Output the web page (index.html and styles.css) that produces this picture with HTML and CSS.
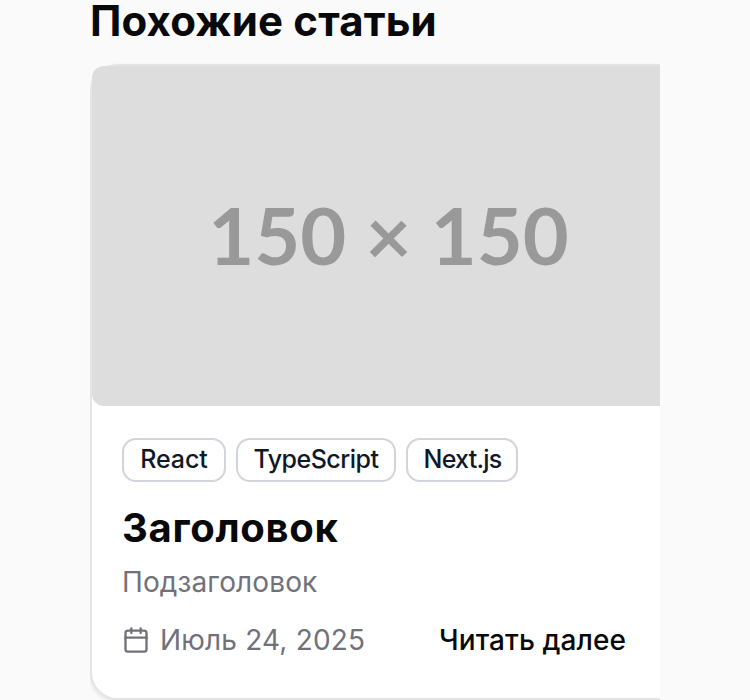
FILE: index.html
```html
<!DOCTYPE html>
<html lang="ru">
<head>
<meta charset="utf-8">
<title>Похожие статьи</title>
<link rel="stylesheet" href="styles.css">
</head>
<body>
<section class="related">
  <h2 class="heading">Похожие статьи</h2>
  <article class="card">
    <div class="thumb"><span>150 × 150</span></div>
    <div class="body">
      <div class="tags"><span class="tag react">React</span><span class="tag ts">TypeScript</span><span class="tag next">Next.js</span></div>
      <h3 class="title">Заголовок</h3>
      <p class="subtitle">Подзаголовок</p>
      <div class="footer">
        <svg class="icon" viewBox="0 0 24 24"><path d="M8 2v4M16 2v4M3 10h18"/><rect x="3" y="4" width="18" height="18" rx="2"/></svg>
        <span class="date">Июль 24, 2025</span>
        <a class="more">Читать далее</a>
      </div>
    </div>
  </article>
</section>
</body>
</html>
```
FILE: styles.css
```css
* { box-sizing: border-box; }
body { margin: 0; background: #fafafa; color: #09090b; font-family: Inter, "Liberation Sans", sans-serif; height: 700px; overflow: hidden; }
.related { margin-left: 90px; width: 570px; height: 700px; overflow-x: clip; }
.heading { margin: 0; height: 64px; font-size: 42px; line-height: 42px; font-weight: 700; letter-spacing: .15px; white-space: nowrap; }
.card { width: 600px; height: 636px; background: #fff; border: 2px solid #e4e4e4; border-radius: 28px; box-shadow: 0 2px 4px rgba(0,0,0,.1); }
.thumb { width: 596px; height: 340px; padding: 0 3px 3px 0; background: #ddd; border-radius: 12px; display: flex; align-items: center; justify-content: center; color: #999; font: 700 79.3px Lato, sans-serif; white-space: nowrap; }
.body { padding: 32px 32px 0 30px; }
.tags { display: flex; gap: 10px; }
.tag { height: 44px; border: 2px solid #d1d5db; border-radius: 14px; color: #111827; font-size: 25px; line-height: 38px; font-weight: 450; text-align: center; white-space: nowrap; }
.react { width: 104px; letter-spacing: -.1px; }
.ts { width: 160px; letter-spacing: -.5px; }
.next { width: 112px; padding-left: 1px; letter-spacing: -.75px; }
.title { margin: 20px 0 0; font-size: 40px; line-height: 52px; letter-spacing: .7px; }
.subtitle { margin: 8px 0 0; font-size: 28px; line-height: 40px; letter-spacing: .12px; color: #71717a; }
.footer { display: flex; align-items: center; height: 40px; margin-top: 18px; font-size: 28px; white-space: nowrap; }
.icon { width: 28px; height: 28px; fill: none; stroke: #71717a; stroke-width: 2; stroke-linecap: round; stroke-linejoin: round; margin-right: 10px; }
.date { width: 279px; letter-spacing: .18px; color: #71717a; }
.more { font-weight: 500; letter-spacing: .08px; }
```
